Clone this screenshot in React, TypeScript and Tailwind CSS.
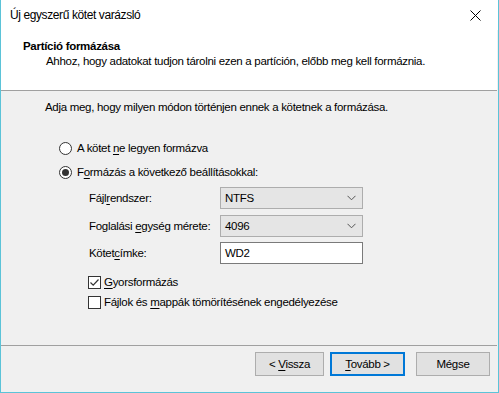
import React from 'react';

const U = ({ children }: { children: React.ReactNode }) => <span className="underline underline-offset-2">{children}</span>;

const Radio = ({ checked, children }: { checked?: boolean; children: React.ReactNode }) => (
  <div className="flex items-center h-[16px]">
    <span className="w-[13px] h-[13px] rounded-full border border-[#333] bg-white flex items-center justify-center">
      {checked && <span className="w-[7px] h-[7px] rounded-full bg-[#333]" />}
    </span>
    <span className="ml-[5px]">{children}</span>
  </div>
);

const Check = ({ checked, children }: { checked?: boolean; children: React.ReactNode }) => (
  <div className="flex items-center h-[16px]">
    <span className="w-[13px] h-[13px] border border-[#333] bg-white flex items-center justify-center">
      {checked && (
        <svg width="11" height="11" viewBox="0 0 11 11">
          <path d="M1.5 5.5 L4.2 8.2 L9.5 2.5" fill="none" stroke="#333" strokeWidth="1.2" />
        </svg>
      )}
    </span>
    <span className="ml-[3px]">{children}</span>
  </div>
);

const Select = ({ value }: { value: string }) => (
  <div className="w-[143px] h-[22px] border border-[#adadad] bg-[#e5e5e5] flex items-center justify-between pl-[4px] pr-[6px]">
    <span>{value}</span>
    <svg width="9" height="6" viewBox="0 0 9 6">
      <path d="M0.5 0.8 L4.5 4.8 L8.5 0.8" fill="none" stroke="#555" strokeWidth="1" />
    </svg>
  </div>
);

const Btn = ({ children, primary, w }: { children: React.ReactNode; primary?: boolean; w: string }) => (
  <div
    className={
      'h-[24px] flex items-center justify-center bg-[#e1e1e1] ' +
      w +
      (primary ? ' border-2 border-[#0078d7]' : ' border border-[#adadad]')
    }
  >
    <span>{children}</span>
  </div>
);

export default function App() {
  return (
    <div className="w-[499px] h-[393px] border-x border-b border-[#5bc3d8] bg-[#f0f0f0] flex flex-col text-[11.5px] leading-[15px] tracking-[-0.3px] text-black font-['Segoe_UI','Liberation_Sans',sans-serif] whitespace-nowrap">
      <div className="bg-white h-[30px] flex items-center justify-between pl-[9px] pr-[17px] shrink-0">
        <span className="text-[12px] tracking-[-0.4px]">Új egyszerű kötet varázsló</span>
        <svg width="11" height="11" viewBox="0 0 11 11">
          <path d="M0.5 0.5 L10.5 10.5 M10.5 0.5 L0.5 10.5" stroke="#000" strokeWidth="1" />
        </svg>
      </div>
      <div className="bg-white h-[61px] border-b border-[#a0a0a0] pl-[22px] pt-[9px] shrink-0 mr-[1px]">
        <div className="font-bold">Partíció formázása</div>
        <div className="pl-[23px]">Ahhoz, hogy adatokat tudjon tárolni ezen a partíción, előbb meg kell formáznia.</div>
      </div>
      <div className="h-[255px] border-b border-[#a0a0a0] pl-[44px] pt-[9px] shrink-0 mr-[1px]">
        <div>Adja meg, hogy milyen módon történjen ennek a kötetnek a formázása.</div>
        <div className="pl-[14px] mt-[25px] flex flex-col gap-[8px]">
          <Radio>A kötet <U>n</U>e legyen formázva</Radio>
          <Radio checked>F<U>o</U>rmázás a következő beállításokkal:</Radio>
        </div>
        <div className="pl-[44px] mt-[7px] flex flex-col gap-[6px]">
          <div className="flex items-center">
            <span className="w-[131px]">Fájl<U>r</U>endszer:</span>
            <Select value="NTFS" />
          </div>
          <div className="flex items-center">
            <span className="w-[131px]">Foglalási <U>e</U>gység mérete:</span>
            <Select value="4096" />
          </div>
          <div className="flex items-center -mt-[1px]">
            <span className="w-[131px]">Kötet<U>c</U>ímke:</span>
            <div className="w-[143px] h-[22px] border border-[#7a7a7a] bg-white flex items-center pl-[4px]">WD2</div>
          </div>
        </div>
        <div className="pl-[43px] mt-[10px] flex flex-col gap-[4px]">
          <Check checked><U>G</U>yorsformázás</Check>
          <Check>Fájlok és <U>m</U>appák tömörítésének engedélyezése</Check>
        </div>
      </div>
      <div className="flex pt-[6px] pl-[254px]">
        <Btn w="w-[69px]">&lt; <U>V</U>issza</Btn>
        <div className="ml-[6px]"><Btn primary w="w-[75px]"><U>T</U>ovább &gt;</Btn></div>
        <div className="ml-[11px]"><Btn w="w-[74px]">Mégse</Btn></div>
      </div>
    </div>
  );
}
